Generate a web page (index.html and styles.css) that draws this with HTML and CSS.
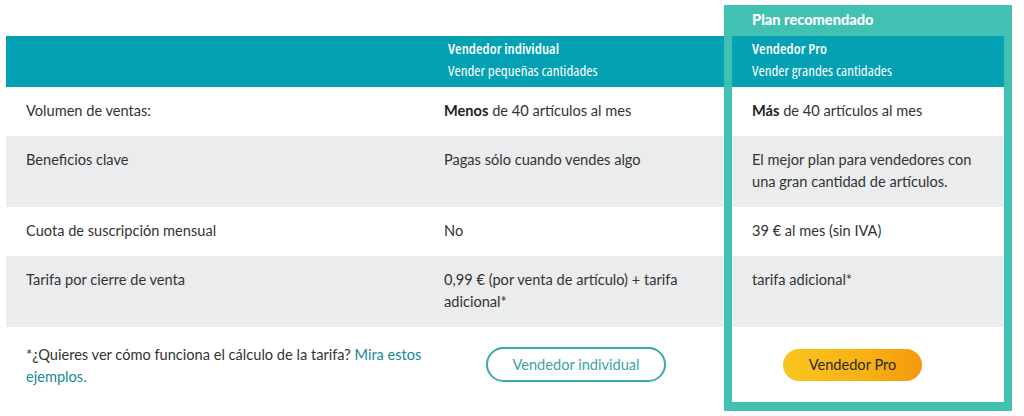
FILE: index.html
```html
<!DOCTYPE html>
<html lang="es">
<head>
<meta charset="utf-8">
<title>Planes de venta</title>
<link rel="stylesheet" href="styles.css">
</head>
<body>
<div class="plans">
  <div class="cell blank"></div>
  <div class="cell blank"></div>
  <div class="cell pro label">Plan recomendado</div>

  <div class="cell head"></div>
  <div class="cell head"><strong>Vendedor individual</strong><span>Vender pequeñas cantidades</span></div>
  <div class="cell head pro"><strong>Vendedor Pro</strong><span>Vender grandes cantidades</span></div>

  <div class="cell">Volumen de ventas:</div>
  <div class="cell"><b>Menos</b> de 40 artículos al mes</div>
  <div class="cell pro"><b>Más</b> de 40 artículos al mes</div>

  <div class="cell gray">Beneficios clave</div>
  <div class="cell gray">Pagas sólo cuando vendes algo</div>
  <div class="cell gray pro">El mejor plan para vendedores con una gran cantidad de artículos.</div>

  <div class="cell">Cuota de suscripción mensual</div>
  <div class="cell">No</div>
  <div class="cell pro">39 € al mes (sin IVA)</div>

  <div class="cell gray">Tarifa por cierre de venta</div>
  <div class="cell gray">0,99 € (por venta de artículo) + tarifa adicional*</div>
  <div class="cell gray pro">tarifa adicional*</div>

  <div class="cell foot note">*¿Quieres ver cómo funciona el cálculo de la tarifa? <a href="#">Mira estos ejemplos.</a></div>
  <div class="cell foot act-ind"><a class="btn btn-outline" href="#">Vendedor individual</a></div>
  <div class="cell foot pro last act-pro"><a class="btn btn-pro" href="#">Vendedor Pro</a></div>
</div>
</body>
</html>
```
FILE: styles.css
```css
* { box-sizing: border-box; }
html, body { margin: 0; background: #fff; }
body {
  font-family: Lato, "Open Sans", Arial, sans-serif;
  font-size: 14.6px;
  color: #333;
  width: 1024px;
  height: 416px;
  overflow: hidden;
}
.plans {
  display: grid;
  grid-template-columns: 418px 300px 288px;
  padding: 5px 0 0 6px;
}
.cell {
  padding: 13px 20px 14px;
  line-height: 22px;
  background: #fff;
}
.blank { background: transparent; padding: 0; }
.gray { background: #ebeced; }
.pro {
  border-left: 8px solid #40c1b2;
  border-right: 8px solid #40c1b2;
  padding-left: 20px;
}
.label {
  background: #40c1b2;
  color: #fff;
  font-weight: 900;
  font-size: 14.6px;
  height: 31px;
  padding-top: 4px;
  padding-bottom: 0;
  line-height: 22px;
}
.head {
  background: #03a1b3;
  color: #fff;
  font-family: "Open Sans", sans-serif;
  font-stretch: 78%;
  font-size: 15px;
  display: flex;
  flex-direction: column;
  padding-top: 1px;
  padding-bottom: 7px;
  padding-left: 24px;
  line-height: 22px;
  height: 51px;
}
.head.pro { padding-left: 20px; }
.head strong { font-weight: 650; }
b { font-weight: 700; color: #222; }
.foot { padding-top: 17px; padding-bottom: 0; height: 75px; }
.note { padding-right: 0; }
.note a { color: #16899a; text-decoration: none; }
.last { border-bottom: 9px solid #40c1b2; height: 84px; }
.act-ind { padding: 20px 0 0 62px; }
.act-pro { padding: 22px 0 0 51px; }
.btn {
  display: inline-flex;
  align-items: center;
  justify-content: center;
  border-radius: 20px;
  text-decoration: none;
  font-size: 14.6px;
}
.btn-outline {
  width: 180px;
  height: 35px;
  border: 2px solid #3aa9b1;
  color: #3e9fa9;
}
.btn-pro {
  width: 139px;
  height: 32px;
  background: linear-gradient(90deg, #f9c521 0%, #f7b112 60%, #f4990f 100%);
  color: #2a2a2a;
}
```
